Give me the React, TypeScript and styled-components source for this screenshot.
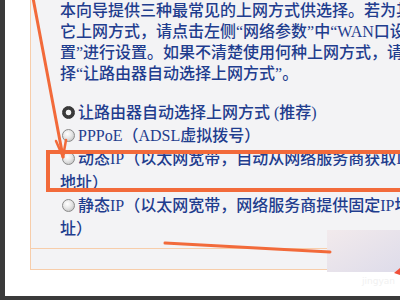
import React from "react";
import styled, { createGlobalStyle } from "styled-components";

const GlobalStyle = createGlobalStyle`
  html, body { margin: 0; padding: 0; background: #3b3b3b; overflow: hidden; }
  #root { width: 400px; height: 300px; }
`;

const Screen = styled.div`
  position: relative;
  width: 400px;
  height: 300px;
  box-sizing: border-box;
  padding: 0 0 4px 5px;
  background: #3a3a3a;
  overflow: hidden;
`;

const Sheet = styled.div`
  height: 296px;
  background: #ffffff;
  padding-left: 25px;
  overflow: hidden;
`;

const Panel = styled.div`
  width: 420px;
  background: #f3f3f5;
  border-left: 1.5px solid #f7cdaa;
  border-bottom: 1.5px solid #f7cdaa;
`;

const Content = styled.div`
  padding: 0 0 8px 29px;
  border-bottom: 1.5px solid #f7cdaa;
  color: #1f3d8e;
  font-family: "Liberation Serif", "Noto Sans CJK SC", serif;
  font-size: 16px;
  font-weight: 500;
`;

const Line = styled.div`
  white-space: nowrap;
  line-height: 21px;
`;

const Options = styled.div`
  margin-top: 17px;
`;

const OptionLine = styled.div<{ $indent?: boolean }>`
  display: flex;
  align-items: center;
  white-space: nowrap;
  line-height: 23.2px;
  height: 23.2px;
  padding-left: ${(p) => (p.$indent ? "0" : "2px")};
`;

const Radio = styled.span<{ $checked?: boolean }>`
  display: inline-block;
  flex: none;
  width: 13px;
  height: 13px;
  margin-right: 3px;
  border-radius: 50%;
  box-sizing: border-box;
  border: 1px solid ${(p) => (p.$checked ? "#333333" : "#8a8a8a")};
  background: ${(p) =>
    p.$checked
      ? "radial-gradient(circle at 50% 50%, #f2f2f2 0 2.4px, #3a3a3a 3.2px)"
      : "radial-gradient(circle at 40% 35%, #ffffff 0, #e6e6e6 45%, #b5b5b5 100%)"};
`;

const Footer = styled.div`
  height: 20px;
`;

const Overlay = styled.svg`
  position: absolute;
  left: 0;
  top: 0;
  pointer-events: none;
`;

const Watermark = styled.span`
  position: absolute;
  left: 362px;
  top: 276px;
  font-family: "DejaVu Sans", sans-serif;
  font-size: 9px;
  color: #f1f1f1;
`;

export default function App() {
  return (
    <>
      <GlobalStyle />
      <Screen>
        <Sheet>
          <Panel>
            <Content>
              <Line>本向导提供三种最常见的上网方式供选择。若为其</Line>
              <Line>它上网方式，请点击左侧“网络参数”中“WAN口设</Line>
              <Line>置”进行设置。如果不清楚使用何种上网方式，请</Line>
              <Line>择“让路由器自动选择上网方式”。</Line>
              <Options>
                <OptionLine>
                  <Radio $checked />
                  让路由器自动选择上网方式 (推荐)
                </OptionLine>
                <OptionLine>
                  <Radio />
                  PPPoE（ADSL虚拟拨号）
                </OptionLine>
                <OptionLine>
                  <Radio />
                  动态IP（以太网宽带，自动从网络服务商获取IP
                </OptionLine>
                <OptionLine $indent>地址）</OptionLine>
                <OptionLine>
                  <Radio />
                  静态IP（以太网宽带，网络服务商提供固定IP地
                </OptionLine>
                <OptionLine $indent>址）</OptionLine>
              </Options>
            </Content>
            <Footer />
          </Panel>
        </Sheet>
        <Overlay width="400" height="300" viewBox="0 0 400 300">
          <defs>
            <linearGradient id="blurbox" x1="0" y1="0" x2="1" y2="1">
              <stop offset="0" stopColor="#f2eaec" />
              <stop offset="1" stopColor="#dedcea" />
            </linearGradient>
          </defs>
          <rect x="327" y="230" width="73" height="42" fill="url(#blurbox)" />
          <g stroke="#f26a3a" strokeLinecap="round" fill="none">
            <line x1="33" y1="-2" x2="63" y2="157" strokeWidth="3" />
            <line x1="63" y1="157" x2="56" y2="141" strokeWidth="2.5" />
            <line x1="63" y1="157" x2="66" y2="140" strokeWidth="2.5" />
            <rect x="48" y="152" width="370" height="38" strokeWidth="4" />
            <line x1="165" y1="243" x2="330" y2="252" strokeWidth="3" />
          </g>
          <polygon points="394,273 400,268 400,275" fill="#f0503a" />
        </Overlay>
        <Watermark>jingyan</Watermark>
      </Screen>
    </>
  );
}
